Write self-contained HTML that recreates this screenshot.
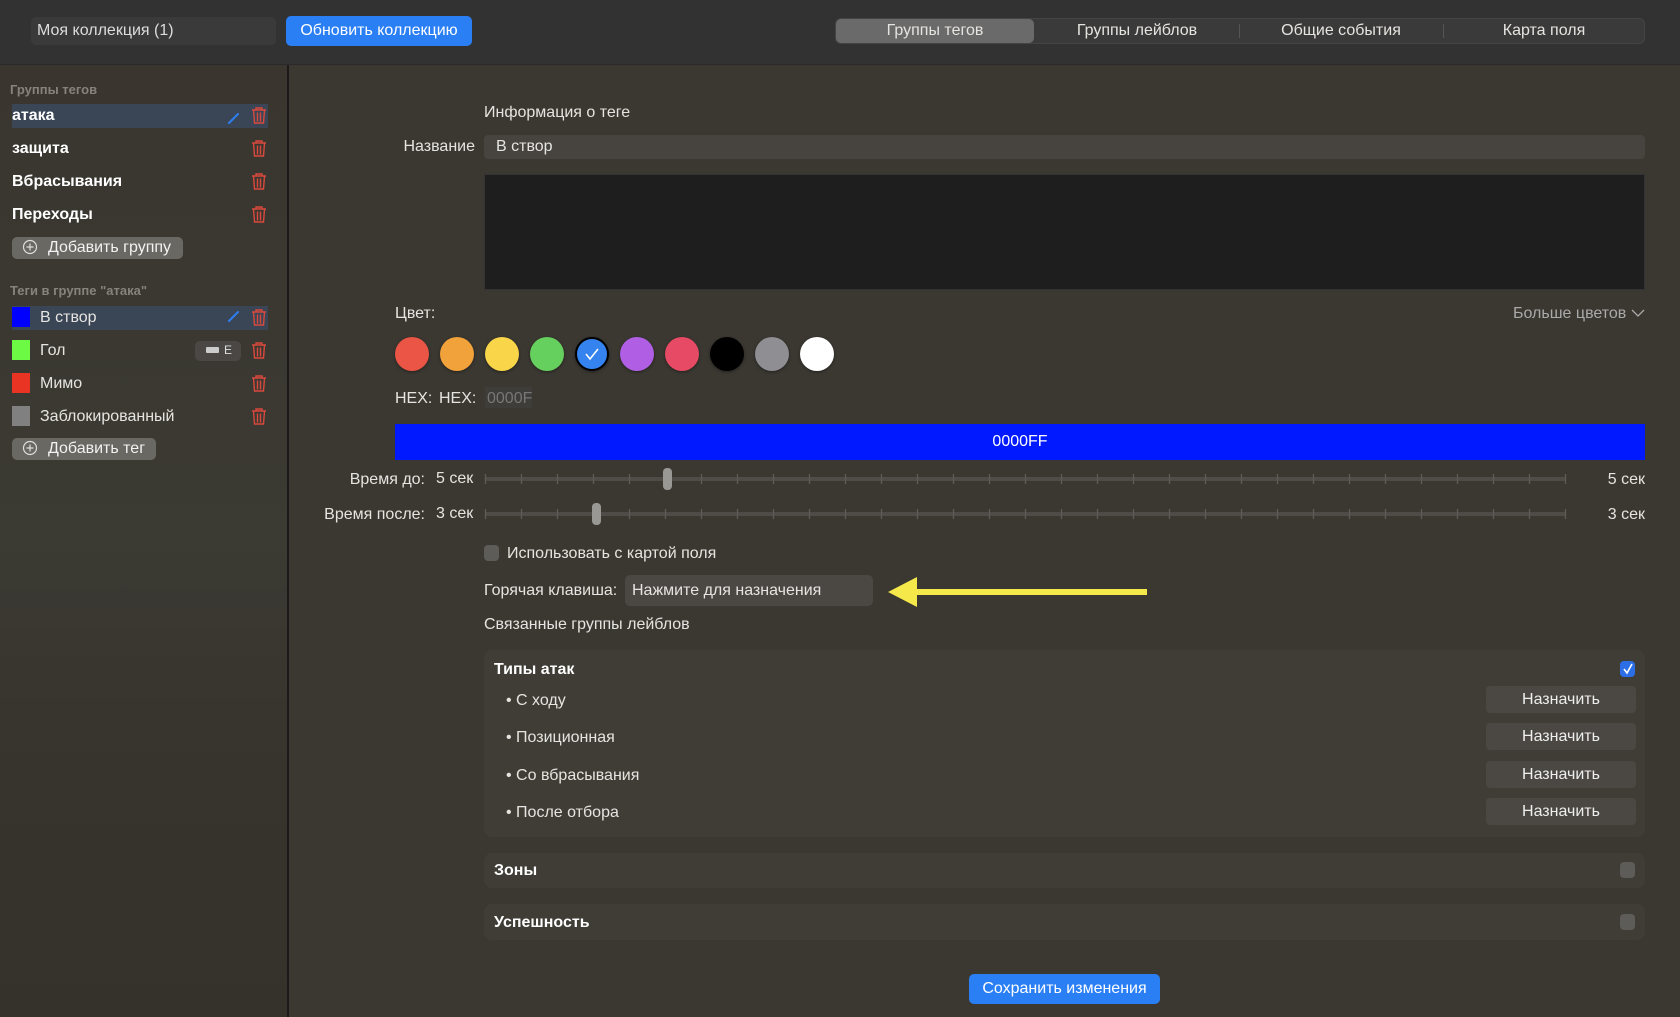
<!DOCTYPE html>
<html><head><meta charset="utf-8"><style>
*{margin:0;padding:0;box-sizing:border-box}
body{width:1680px;height:1017px;overflow:hidden;background:#3b3832;font-family:"Liberation Sans","Noto Sans CJK SC",sans-serif;color:#e6e4e0;font-size:16px;position:relative}
.a{position:absolute;white-space:nowrap}
.top{left:0;top:0;width:1680px;height:65px;background:#323232;border-bottom:1px solid #2a2a2a}
.side{left:0;top:65px;width:287px;height:952px;background:linear-gradient(180deg,#3a362f 0%,#3b3a33 50%,#37332d 75%,#35322c 100%)}
.div{left:287px;top:65px;width:2px;height:952px;background:#1b1a18}
.lbl{color:#86837c;font-weight:bold;font-size:13px}
.b{font-weight:bold;color:#fff}
.hl{background:#3a4656}
.btn{background:#6a6863;border-radius:5px;color:#f2f2f2}
.circ{width:34px;height:34px;border-radius:50%;top:337px;box-shadow:0 1px 3px rgba(0,0,0,.4)}
.track{height:4px;background:#4f4c47;border-radius:2px}
.thumb{width:9px;height:22px;background:#9a9895;border-radius:4px}
.panel{left:484px;width:1161px;background:#403d37;border-radius:8px}
.asg{left:1486px;width:150px;height:27px;background:#4b4843;border-radius:4px;text-align:center;line-height:27px;color:#eee}
.cbx{width:15px;height:16px;border-radius:4px;background:#5e5c58}
</style></head><body>
<div class="a top"></div>
<div class="a" style="left:31px;top:17px;width:245px;height:28px;background:#3a3a3a;border-radius:5px;padding:5px 6px;color:#ddd">Моя коллекция (1)</div>
<div class="a" style="left:286px;top:16px;width:186px;height:30px;background:#2a7ff5;border-radius:5px;text-align:center;line-height:30px;color:#fff">Обновить коллекцию</div>
<div class="a" style="left:835px;top:18px;width:810px;height:26px;background:#3a3a3a;border-radius:6px;border:1px solid #444"></div>
<div class="a" style="left:836px;top:19px;width:198px;height:24px;background:#6a6a6a;border-radius:5px"></div>
<div class="a" style="left:1239px;top:24px;width:1px;height:14px;background:#555"></div>
<div class="a" style="left:1443px;top:24px;width:1px;height:14px;background:#555"></div>
<div class="a" style="left:835px;top:22px;width:200px;text-align:center">Группы тегов</div>
<div class="a" style="left:1035px;top:22px;width:204px;text-align:center">Группы лейблов</div>
<div class="a" style="left:1239px;top:22px;width:204px;text-align:center">Общие события</div>
<div class="a" style="left:1443px;top:22px;width:202px;text-align:center">Карта поля</div>

<div class="a side"></div><div class="a div"></div>
<div class="a lbl" style="left:10px;top:82px">Группы тегов</div>
<div class="a hl" style="left:12px;top:104px;width:256px;height:24px"></div>
<div class="a b" style="left:12px;top:107px">атака</div>
<div class="a b" style="left:12px;top:140px">защита</div>
<div class="a b" style="left:12px;top:173px">Вбрасывания</div>
<div class="a b" style="left:12px;top:206px">Переходы</div>
<div class="a btn" style="left:12px;top:237px;width:171px;height:22px;padding:2px 0 0 36px">Добавить группу</div>
<div class="a lbl" style="left:10px;top:283px">Теги в группе "атака"</div>
<div class="a hl" style="left:12px;top:306px;width:256px;height:24px"></div>
<div class="a" style="left:12px;top:307px;width:18px;height:20px;background:#0000ff"></div>
<div class="a" style="left:40px;top:309px">В створ</div>
<div class="a" style="left:12px;top:340px;width:18px;height:20px;background:#6dfa45"></div>
<div class="a" style="left:40px;top:342px">Гол</div>
<div class="a" style="left:195px;top:341px;width:46px;height:20px;background:#4a4744;border-radius:5px"></div>
<div class="a" style="left:206px;top:347px;width:13px;height:6px;background:#ccc;border-radius:1px"></div>
<div class="a" style="left:224px;top:343px;font-size:12px;color:#ddd">E</div>
<div class="a" style="left:12px;top:373px;width:18px;height:20px;background:#e93323"></div>
<div class="a" style="left:40px;top:375px">Мимо</div>
<div class="a" style="left:12px;top:406px;width:18px;height:20px;background:#808080"></div>
<div class="a" style="left:40px;top:408px">Заблокированный</div>
<div class="a btn" style="left:12px;top:438px;width:144px;height:22px;padding:2px 0 0 36px">Добавить тег</div>
<svg class="a" style="left:0;top:0" width="290" height="480">
<g fill="none" stroke="#ddd" stroke-width="1.2"><circle cx="30" cy="247" r="6.5"/><path d="M30 243.5v7M26.5 247h7"/><circle cx="30" cy="448" r="6.5"/><path d="M30 444.5v7M26.5 448h7"/></g>
<g stroke="#2d7ff0" stroke-width="2" stroke-linecap="round"><path d="M229 123l9-9M229 321l9-9"/></g>
<g fill="none" stroke="#d9493d" stroke-width="1.4">
<g id="t"><path d="M252 110h14M256 110v-2h6v2M253.5 110l1 13h9l1-13M257.5 112.5v9M260.5 112.5v9"/></g>
<use href="#t" y="33"/><use href="#t" y="66"/><use href="#t" y="99"/><use href="#t" y="202"/><use href="#t" y="235"/><use href="#t" y="268"/><use href="#t" y="301"/>
</g></svg>

<div class="a" style="left:484px;top:104px">Информация о теге</div>
<div class="a" style="left:375px;top:138px;width:100px;text-align:right">Название</div>
<div class="a" style="left:484px;top:135px;width:1161px;height:24px;background:#47443f;border-radius:4px;padding:3px 12px">В створ</div>
<div class="a" style="left:484px;top:174px;width:1161px;height:116px;background:#1e1e1e;border:1px solid #333"></div>
<div class="a" style="left:395px;top:305px">Цвет:</div>
<div class="a" style="left:1513px;top:305px;color:#aaa">Больше цветов</div>
<svg class="a" style="left:1631px;top:308px" width="14" height="10"><path d="M1 2l6 6 6-6" fill="none" stroke="#aaa" stroke-width="1.3"/></svg>
<div class="a circ" style="left:395px;background:#ea5545"></div>
<div class="a circ" style="left:440px;background:#f2a23b"></div>
<div class="a circ" style="left:485px;background:#f9d54a"></div>
<div class="a circ" style="left:530px;background:#66d05e"></div>
<div class="a circ" style="left:575px;background:#3483ee;border:2px solid #000"></div>
<svg class="a" style="left:584px;top:346px" width="16" height="16"><path d="M2 8l4 5 8-10" fill="none" stroke="#fff" stroke-width="1.5"/></svg>
<div class="a circ" style="left:620px;background:#b05fe4"></div>
<div class="a circ" style="left:665px;background:#e74a64"></div>
<div class="a circ" style="left:710px;background:#000"></div>
<div class="a circ" style="left:755px;background:#8f8e93"></div>
<div class="a circ" style="left:800px;background:#fff"></div>
<div class="a" style="left:395px;top:390px">HEX:</div>
<div class="a" style="left:439px;top:390px">HEX:</div>
<div class="a" style="left:485px;top:387px;width:47px;height:21px;background:#3f3d39;color:#777;padding:3px 2px;overflow:hidden">0000FF</div>
<div class="a" style="left:395px;top:424px;width:1250px;height:36px;background:#0019ff;text-align:center;line-height:36px;color:#fff">0000FF</div>

<div class="a" style="left:295px;top:471px;width:130px;text-align:right">Время до:</div>
<div class="a" style="left:436px;top:470px">5 сек</div>
<div class="a" style="left:1560px;top:471px;width:85px;text-align:right">5 сек</div>
<div class="a" style="left:295px;top:506px;width:130px;text-align:right">Время после:</div>
<div class="a" style="left:436px;top:505px">3 сек</div>
<div class="a" style="left:1560px;top:506px;width:85px;text-align:right">3 сек</div>
<div class="a track" style="left:485px;top:477px;width:1081px"></div>
<div class="a track" style="left:485px;top:512px;width:1081px"></div>
<svg class="a" style="left:0;top:0" width="1680" height="530"><g stroke="#5f5c57" stroke-width="1.3" id="tk">
<path d="M485.5 474v10M521.5 474v10M557.5 474v10M593.5 474v10M629.5 474v10M665.5 474v10M701.5 474v10M737.5 474v10M773.5 474v10M809.5 474v10M845.5 474v10M881.5 474v10M917.5 474v10M953.5 474v10M989.5 474v10M1025.5 474v10M1061.5 474v10M1097.5 474v10M1133.5 474v10M1169.5 474v10M1205.5 474v10M1241.5 474v10M1277.5 474v10M1313.5 474v10M1349.5 474v10M1385.5 474v10M1421.5 474v10M1457.5 474v10M1493.5 474v10M1529.5 474v10M1565.5 474v10"/></g><use href="#tk" y="35"/></svg>
<div class="a thumb" style="left:663px;top:468px"></div>
<div class="a thumb" style="left:592px;top:503px"></div>

<div class="a cbx" style="left:484px;top:545px"></div>
<div class="a" style="left:507px;top:545px">Использовать с картой поля</div>
<div class="a" style="left:484px;top:582px">Горячая клавиша:</div>
<div class="a" style="left:625px;top:575px;width:248px;height:31px;background:#4b4843;border-radius:5px;padding:7px 7px">Нажмите для назначения</div>
<svg class="a" style="left:880px;top:570px" width="280" height="45"><path d="M8 22L37 7v12h230v6H37v12z" fill="#f5e84a"/></svg>
<div class="a" style="left:484px;top:616px">Связанные группы лейблов</div>

<div class="a panel" style="top:650px;height:187px"></div>
<div class="a b" style="left:494px;top:661px">Типы атак</div>
<div class="a" style="left:1620px;top:661px;width:15px;height:16px;border-radius:4px;background:#2b6ee6"></div>
<svg class="a" style="left:1621px;top:662px" width="14" height="14"><path d="M3 7l3 4 5-9" fill="none" stroke="#fff" stroke-width="1.6"/></svg>
<div class="a" style="left:506px;top:692px">• С ходу</div>
<div class="a" style="left:506px;top:729px">• Позиционная</div>
<div class="a" style="left:506px;top:767px">• Со вбрасывания</div>
<div class="a" style="left:506px;top:804px">• После отбора</div>
<div class="a asg" style="top:686px">Назначить</div>
<div class="a asg" style="top:723px">Назначить</div>
<div class="a asg" style="top:761px">Назначить</div>
<div class="a asg" style="top:798px">Назначить</div>

<div class="a panel" style="top:853px;height:35px"></div>
<div class="a b" style="left:494px;top:862px">Зоны</div>
<div class="a cbx" style="left:1620px;top:862px"></div>
<div class="a panel" style="top:904px;height:36px"></div>
<div class="a b" style="left:494px;top:914px">Успешность</div>
<div class="a cbx" style="left:1620px;top:914px"></div>

<div class="a" style="left:969px;top:974px;width:191px;height:30px;background:#2a7ff5;border-radius:5px;text-align:center;line-height:30px;color:#fff">Сохранить изменения</div>
</body></html>
